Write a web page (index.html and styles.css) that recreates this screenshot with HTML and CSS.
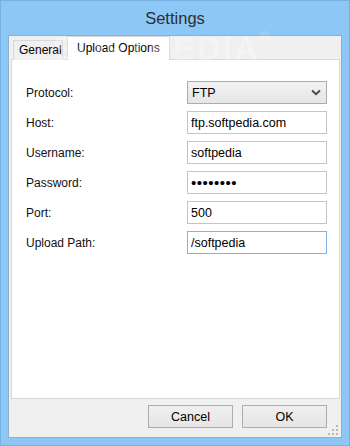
FILE: index.html
```html
<!DOCTYPE html>
<html lang="en">

<head>
  <meta charset="UTF-8" />
  <title>Settings</title>
  <link rel="stylesheet" href="styles.css">
</head>

<body>
  <div class="window">
    <div class="titlebar">Settings</div>
    <div class="watermark">SOFTPEDIA<span class="reg">®</span></div>

    <div class="client">
      <!-- Tabs -->
      <div class="tabs">
        <div class="tab">General</div>
        <div class="tab active">Upload Options</div>
      </div>

      <!-- Upload Options page -->
      <div class="panel">
        <div class="form">
          <label>Protocol:</label>
          <div class="dropdown">
            <span>FTP</span>
            <svg width="10" height="7" viewBox="0 0 10 7">
              <path d="M1 1.5 L5 5.2 L9 1.5" fill="none" stroke="#4a4a4a" stroke-width="2" />
            </svg>
          </div>

          <label>Host:</label>
          <input type="text" value="ftp.softpedia.com" />

          <label>Username:</label>
          <input type="text" value="softpedia" />

          <label>Password:</label>
          <input type="password" class="pass" value="softpedi" />

          <label>Port:</label>
          <input type="text" value="500" />

          <label>Upload Path:</label>
          <input type="text" class="focused" value="/softpedia" />
        </div>
      </div>

      <div class="footer">
        <button>Cancel</button>
        <button>OK</button>
      </div>

      <svg class="grip" width="11" height="11" viewBox="0 0 11 11">
        <rect x="8" y="0" width="2" height="2" fill="#b9b9b9" />
        <rect x="4" y="4" width="2" height="2" fill="#b9b9b9" />
        <rect x="8" y="4" width="2" height="2" fill="#b9b9b9" />
        <rect x="0" y="8" width="2" height="2" fill="#b9b9b9" />
        <rect x="4" y="8" width="2" height="2" fill="#b9b9b9" />
        <rect x="8" y="8" width="2" height="2" fill="#b9b9b9" />
      </svg>
    </div>
  </div>
</body>

</html>
```

FILE: styles.css
```css
body {
  margin: 0;
  font-family: 'Liberation Sans', Arial, sans-serif;
  font-size: 12px;
  color: #000;
}

.window {
  position: relative;
  width: 350px;
  height: 446px;
  box-sizing: border-box;
  background: #8cc7f6;
  border: 1px solid #76b1e2;
  display: flex;
  flex-direction: column;
}

.titlebar {
  height: 34px;
  line-height: 34px;
  text-align: center;
  font-size: 16.5px;
  color: #2e2e2e;
}

/* faint watermark across the title area */
.watermark {
  position: absolute;
  left: 52px;
  top: 29px;
  font-size: 33px;
  font-weight: bold;
  letter-spacing: 2px;
  color: rgba(255, 255, 255, 0.3);
  pointer-events: none;
  z-index: 5;
}

.watermark .reg {
  font-size: 12px;
  vertical-align: top;
  font-weight: normal;
}

.client {
  position: relative;
  margin: 0 7px 7px 7px;
  flex: 1;
  background: #f0f0f0;
  border: 1px solid #8fb0cc;
  display: flex;
  flex-direction: column;
  padding: 0 1px 0 2px;
}

.tabs {
  height: 24px;
  display: flex;
  align-items: flex-end;
  padding-left: 2px;
  gap: 4px;
  position: relative;
  z-index: 2;
  margin-bottom: -1px;
}

.tab {
  width: 50px;
  height: 20px;
  line-height: 19px;
  padding-left: 5px;
  box-sizing: border-box;
  background: #f0f0f0;
  border: 1px solid #d9d9d9;
  border-bottom: none;
  color: #000;
  white-space: nowrap;
}

.tab.active {
  width: 103px;
  height: 24px;
  line-height: 22px;
  padding-left: 9px;
  background: #fff;
}

.panel {
  height: 340px;
  box-sizing: border-box;
  background: #fff;
  border: 1px solid #d9d9d9;
  padding: 21px 11px 0 14px;
}

.form {
  display: grid;
  grid-template-columns: 161px 140px;
  grid-auto-rows: 23px;
  row-gap: 7px;
  align-items: center;
}

.form label {
  color: #111;
}

.dropdown {
  height: 23px;
  box-sizing: border-box;
  border: 1px solid #acacac;
  background: linear-gradient(#f2f2f2, #e6e6e6);
  display: flex;
  align-items: center;
  justify-content: space-between;
  padding: 0 5px 0 4px;
  font-size: 12.5px;
}

.form input {
  height: 23px;
  box-sizing: border-box;
  margin: 0;
  border: 1px solid #c4c4c4;
  padding: 0 3px;
  font-family: 'Liberation Sans', Arial, sans-serif;
  font-size: 12.5px;
  color: #000;
  outline: none;
}

.form input.pass {
  font-size: 15px;
  letter-spacing: 0.5px;
}

.form input.focused {
  border-color: #7eb4ea;
}

.footer {
  flex: 1;
  display: flex;
  justify-content: flex-end;
  align-items: flex-start;
  gap: 9px;
  padding: 6px 13px 0 0;
}

.footer button {
  width: 85px;
  height: 23px;
  margin: 0;
  border: 1px solid #acacac;
  background: linear-gradient(#f0f0f0, #e5e5e5);
  font-family: 'Liberation Sans', Arial, sans-serif;
  font-size: 12.5px;
  color: #000;
}

.grip {
  position: absolute;
  right: 2px;
  bottom: 1px;
}
```
